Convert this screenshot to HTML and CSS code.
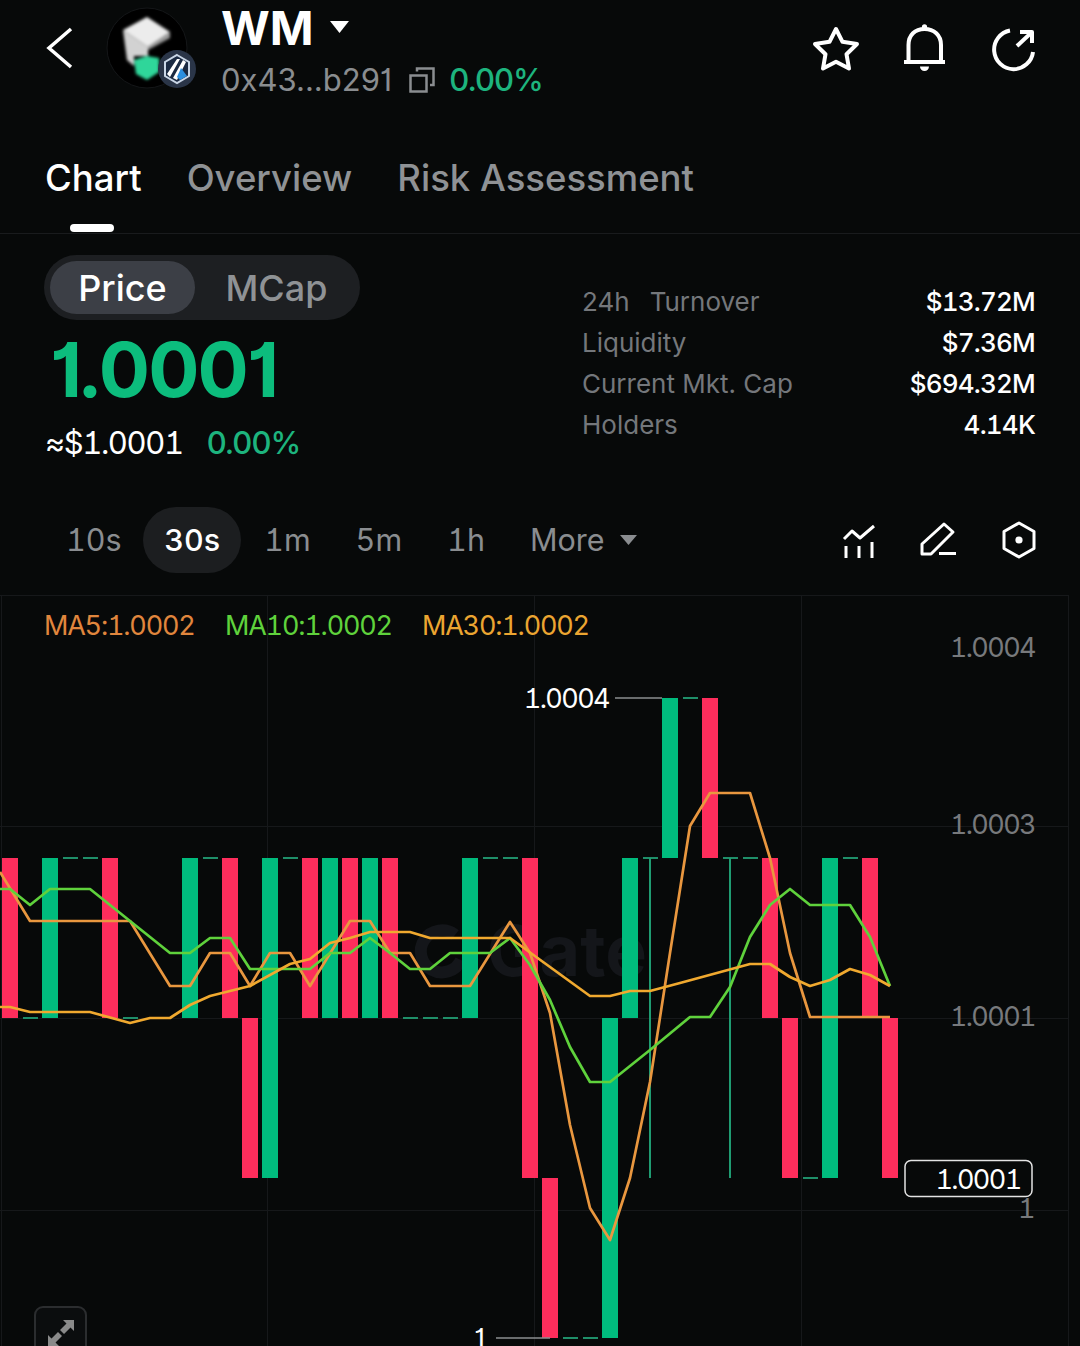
FILE: index.html
```html
<!DOCTYPE html>
<html lang="en">
<head>
<meta charset="utf-8">
<title>WM Chart</title>
<link rel="stylesheet" href="styles.css">
</head>
<body>
<main class="page">
  <header class="header">
    <svg class="back" viewBox="46 24 28 48"><polyline points="71,29 49,48 71,67"/></svg>
    <svg class="avatar" viewBox="107 3 90 90">
      <circle class="av-disc" cx="147" cy="48" r="40"/>
      <g class="av-cube">
        <polygon class="c1" points="147,17 170,32 148,47 123,30"/>
        <polygon class="c2" points="123,30 148,47 148,56 134,56 134,66 127,60"/>
        <polygon class="c3" points="148,47 170,32 170,38 148,50"/>
        <polygon class="c4" points="134,60 147,56 159,58 159,72 147,80 136,74"/>
      </g>
      <circle class="bd-disc" cx="177" cy="69" r="19"/>
      <polygon class="bd-hex" points="177,55 189,62 189,76 177,83 165,76 165,62"/>
      <path class="bd-white" d="M167 74 L177 59 L180 59 L170 77 Z M173 78 L183 60 L186 62 L177 80 Z"/>
      <path class="bd-blue" d="M181 68 L187 76 L180 80 L177 77 Z"/>
    </svg>
    <div class="title-col">
      <div class="title-row">
        <h1 class="symbol">WM</h1>
        <svg class="title-caret" viewBox="0 0 19 12"><polygon points="0,0 19,0 9.5,12"/></svg>
      </div>
      <div class="addr-row">
        <span class="addr">0x43...b291</span>
        <svg class="copy" viewBox="0 0 26 26"><rect x="1.5" y="8.5" width="16" height="16"/><path d="M8 4.5 V1.5 H24.5 V18 H21"/></svg>
        <span class="change">0.00%</span>
      </div>
    </div>
    <div class="actions">
      <svg class="act" viewBox="0 0 48 48"><polygon points="24,4 30.5,16.8 45,19 34.5,29.2 37,43.5 24,36.7 11,43.5 13.5,29.2 3,19 17.5,16.8"/></svg>
      <svg class="act bell" viewBox="1 0 48 50"><path d="M8.5 38 V21 C8.5 11 15 5 24.5 5 S41 11 41 21 V38"/><path d="M4 38 H45"/><path class="solid" d="M20 42.5 h9 a4.5 4.5 0 0 1 -9 0 z"/><circle class="solid" cx="24.5" cy="2.8" r="2.6"/></svg>
      <svg class="act" viewBox="0 0 48 50"><path d="M20 6.5 A19.5 19.5 0 1 0 43 28"/><path d="M27 22 L42 8"/><path d="M30 8 H42 V19"/></svg>
    </div>
  </header>

  <nav class="tabs">
    <div class="tab active">Chart<i class="tab-mark"></i></div>
    <div class="tab">Overview</div>
    <div class="tab">Risk Assessment</div>
  </nav>

  <section class="market">
    <div class="market-left">
      <div class="toggle">
        <span class="toggle-item on">Price</span>
        <span class="toggle-item">MCap</span>
      </div>
      <div class="price">1.0001</div>
      <div class="sub">
        <span class="sub-value">≈$1.0001</span>
        <span class="sub-change">0.00%</span>
      </div>
    </div>
    <dl class="stats">
      <dt><span class="h24">24h</span>Turnover</dt><dd>$13.72M</dd>
      <dt>Liquidity</dt><dd>$7.36M</dd>
      <dt>Current Mkt. Cap</dt><dd>$694.32M</dd>
      <dt>Holders</dt><dd>4.14K</dd>
    </dl>
  </section>

  <section class="toolbar">
    <span class="tf">10s</span>
    <span class="tf on">30s</span>
    <span class="tf">1m</span>
    <span class="tf">5m</span>
    <span class="tf">1h</span>
    <span class="tf more">More<svg class="more-caret" viewBox="0 0 17 10"><polygon points="0,0 17,0 8.5,10"/></svg></span>
    <div class="tools">
      <svg class="tool t1" viewBox="843 520 33 38"><polyline points="844,538 852,530 860,537 874,525"/><path d="M846 545 V557 M859 545 V557 M872 541 V557"/></svg>
      <svg class="tool t2" viewBox="922 520 37 38"><path d="M924 543 L946 523 L955 531 L933 553 H924 Z"/><path d="M941 552.5 H958"/></svg>
      <svg class="tool t3" viewBox="1001 520 36 40"><polygon points="1019,523 1034,531.5 1034,548.5 1019,557 1004,548.5 1004,531.5"/><circle class="solid" cx="1019" cy="540" r="3.6"/></svg>
    </div>
  </section>

  <section class="chart">
    <svg class="plot" viewBox="0 595 1080 751">
      <path class="grid" d="M0 595.5 H1068 M0 826.5 H1068 M0 1018.5 H1068 M0 1210.5 H1068 M1.5 595 V1346 M267.5 595 V1346 M534.5 595 V1346 M801.5 595 V1346 M1068.5 595 V1346"/>
      <path class="wm-logo" d="M455 935 A21 21 0 1 0 461 960"/>
      <text class="wm" x="487" y="976">Gate</text>

      <path class="dash" d="M63 858 H78 M83 858 H98 M203 858 H218 M283 858 H298 M483 858 H498 M503 858 H518 M643 858 H658 M723 858 H738 M743 858 H758 M843 858 H858 M683 698 H698 M23 1018 H38 M123 1018 H138 M403 1018 H418 M423 1018 H438 M443 1018 H458 M803 1178 H818 M563 1338 H578 M583 1338 H598"/>
      <path class="stem" d="M650 858 V1178 M730 858 V1178"/>

      <g class="up">
        <rect x="42" y="858" width="16" height="160"/>
        <rect x="182" y="858" width="16" height="160"/>
        <rect x="262" y="858" width="16" height="320"/>
        <rect x="322" y="858" width="16" height="160"/>
        <rect x="362" y="858" width="16" height="160"/>
        <rect x="462" y="858" width="16" height="160"/>
        <rect x="602" y="1018" width="16" height="320"/>
        <rect x="622" y="858" width="16" height="160"/>
        <rect x="662" y="698" width="16" height="160"/>
        <rect x="822" y="858" width="16" height="320"/>
      </g>
      <g class="down">
        <rect x="2" y="858" width="16" height="160"/>
        <rect x="102" y="858" width="16" height="160"/>
        <rect x="222" y="858" width="16" height="160"/>
        <rect x="242" y="1018" width="16" height="160"/>
        <rect x="302" y="858" width="16" height="160"/>
        <rect x="342" y="858" width="16" height="160"/>
        <rect x="382" y="858" width="16" height="160"/>
        <rect x="522" y="858" width="16" height="320"/>
        <rect x="542" y="1178" width="16" height="160"/>
        <rect x="702" y="698" width="16" height="160"/>
        <rect x="762" y="858" width="16" height="160"/>
        <rect x="782" y="1018" width="16" height="160"/>
        <rect x="862" y="858" width="16" height="160"/>
        <rect x="882" y="1018" width="16" height="160"/>
      </g>

      <polyline class="ma ma5" points="0,872 30,921 130,921 170,986 190,986 210,953 230,953 250,986 270,953 290,953 310,986 350,921 370,921 390,953 410,953 430,986 470,986 510,922 530,953 550,1013 570,1125 590,1208 610,1240 630,1178 650,1082 670,953 690,826 710,793 750,793 770,858 790,953 810,1017 890,1017"/>
      <polyline class="ma ma10" points="0,889 10,889 30,905 50,889 90,889 130,921 170,953 190,953 210,938 230,938 250,969 310,969 330,953 350,953 370,938 390,953 410,969 430,969 450,953 490,953 510,938 530,965 550,1000 570,1047 590,1082 610,1082 650,1050 690,1017 710,1017 730,987 750,937 770,905 790,889 810,905 850,905 870,937 890,986"/>
      <polyline class="ma ma30" points="0,1007 10,1007 30,1012 90,1012 130,1023 150,1018 170,1018 190,1005 210,996 250,986 290,964 310,959 330,943 350,938 370,932 410,932 430,938 510,938 590,996 610,996 630,991 650,991 680,983 750,964 770,964 790,977 810,986 830,980 850,969 870,975 890,986"/>

      <text class="lbl legend l5" x="44" y="635">MA5:1.0002</text>
      <text class="lbl legend l10" x="225" y="635">MA10:1.0002</text>
      <text class="lbl legend l30" x="422" y="635">MA30:1.0002</text>

      <text class="lbl axis end" x="1035" y="657">1.0004</text>
      <text class="lbl axis end" x="1035" y="834">1.0003</text>
      <text class="lbl axis end" x="1035" y="1026">1.0001</text>
      <text class="lbl axis end" x="1034" y="1218">1</text>

      <path class="lead" d="M615 698 H662 M496 1338 H550"/>
      <text class="lbl mark end" x="609" y="708">1.0004</text>
      <text class="lbl mark end" x="488" y="1348">1</text>

      <rect class="tag" x="905" y="1160.500" width="127" height="36" rx="6"/>
      <text class="lbl mark mid" x="978" y="1189">1.0001</text>
    </svg>
    <div class="expand">
      <svg class="expand-icon" viewBox="0 0 26 30"><path d="M15 0 H26 V11 L22.500 7.500 L16 14 L12 10 L18.500 3.500 Z"/><path d="M0 26 V15 L3.500 18.500 L10 12 L14 16 L7.500 22.500 L11 26 Z"/></svg>
    </div>
  </section>
</main>
</body>
</html>
```
FILE: styles.css
```css
* { box-sizing: border-box; margin: 0; padding: 0; }
html, body { background: #070909; }
body { font-family: Inter, "Liberation Sans", sans-serif; color: #fff; }
.page { width: 1080px; height: 1346px; overflow: hidden; display: flex; flex-direction: column; font-feature-settings: "cv01" 1; }

.header { display: flex; height: 110px; padding-left: 46px; flex: none; }
.back { width: 28px; height: 48px; margin-top: 24px; fill: none; stroke: #fff; stroke-width: 3.5; }
.avatar { width: 90px; height: 90px; margin: 3px 0 0 33px; overflow: visible; }
.av-disc { fill: #000; stroke: #141618; stroke-width: 1; }
.av-cube { filter: blur(1.5px); }
.c1 { fill: #ececec; }
.c2 { fill: #d2d2d2; }
.c3 { fill: #9c9c9c; }
.c4 { fill: #2fd69a; }
.bd-disc { fill: #2a3548; }
.bd-hex { fill: #1b2a42; stroke: #c9d6e6; stroke-width: 2; }
.bd-white { fill: #fff; }
.bd-blue { fill: #2b8fe0; }
.title-col { margin-left: 25px; display: flex; flex-direction: column; }
.title-row { display: flex; align-items: center; height: 56px; }
.symbol { font-size: 47px; line-height: 56px; font-weight: 700; margin-left: -1px; }
.title-caret { width: 19px; height: 12px; margin: 0 0 2px 16px; fill: #fff; }
.addr-row { display: flex; align-items: center; height: 48px; }
.addr { font-size: 31px; line-height: 48px; color: #8a8d90; margin-left: -1px; }
.copy { width: 26px; height: 26px; margin-left: 17px; fill: none; stroke: #8a8d90; stroke-width: 2.5; }
.change { font-size: 31px; line-height: 48px; font-weight: 500; color: #1db47e; margin-left: 14px; letter-spacing: -1px; }
.actions { margin-left: auto; margin-right: 42px; display: flex; gap: 41px; padding-top: 24px; }
.act { width: 48px; height: 50px; fill: none; stroke: #fff; stroke-width: 4; stroke-linejoin: round; }
.solid { fill: #fff; stroke: none; }

.tabs { display: flex; gap: 45px; height: 124px; padding: 44px 0 0 45px; border-bottom: 1px solid #191b1d; flex: none; }
.tab { font-size: 36.500px; line-height: 48px; font-weight: 500; color: #8f9295; white-space: nowrap; display: flex; flex-direction: column; }
.tab.active { color: #fff; }
.tab-mark { display: block; width: 44px; height: 8px; border-radius: 4px; background: #fff; margin: 22px 0 0 25px; }

.market { display: flex; justify-content: space-between; height: 273px; padding: 21px 45px 0 44px; flex: none; }
.market-left { display: flex; flex-direction: column; align-items: flex-start; }
.toggle { display: flex; align-items: center; width: 316px; height: 65px; padding: 0 6px; border-radius: 33px; background: #1d1f22; }
.toggle-item { width: 145px; height: 53px; line-height: 54px; border-radius: 27px; font-size: 36px; font-weight: 500; text-align: center; color: #8f9295; }
.toggle-item.on { background: #3c3f46; color: #fff; margin-right: 9px; }
.price { font-size: 76px; line-height: 76px; font-weight: 700; color: #0cbd7d; margin: 11px 0 0 6px; letter-spacing: -1.800px; }
.sub { display: flex; gap: 24px; font-size: 31px; line-height: 40px; margin: 16px 0 0 1px; }
.sub-value { font-feature-settings: "tnum" 1, "cv01" 1; letter-spacing: -1.400px; }
.sub-change { color: #1db47e; font-weight: 500; letter-spacing: -1px; }
.stats { display: grid; grid-template-columns: 1fr auto; width: 453px; margin-top: 25.500px; grid-auto-rows: 41px; font-size: 26px; line-height: 41px; }
.stats dt { color: #74777b; }
.stats dd { color: #fff; text-align: right; font-weight: 500; font-feature-settings: "tnum" 1, "cv01" 1; letter-spacing: -0.800px; }
.h24 { margin-right: 20px; }

.toolbar { display: flex; align-items: center; height: 66px; padding-left: 43.500px; flex: none; }
.tf { padding: 0 22.500px; height: 66px; line-height: 66px; border-radius: 33px; font-size: 30.500px; color: #8a8d90; display: flex; align-items: center; font-feature-settings: "tnum" 1, "cv01" 1; }
.tf.on { padding: 0 21px; margin: 0 0.500px 0 -1px; background: #1c1e20; color: #fff; font-weight: 500; }
.more-caret { width: 17px; height: 10px; margin-left: 15px; fill: #8a8d90; }
.tools { margin-left: auto; margin-right: 43px; display: flex; align-items: center; gap: 44px; }
.tool { height: 38px; fill: none; stroke: #fff; stroke-width: 3; stroke-linejoin: round; overflow: visible; }
.t1 { width: 33px; }
.t2 { width: 37px; }
.t3 { width: 36px; height: 40px; }

.chart { position: relative; margin-top: 22px; flex: 1; min-height: 0; overflow: hidden; }
.plot { display: block; width: 1080px; height: 751px; }
.grid { fill: none; stroke: #16181a; stroke-width: 1; }
.wm { font-size: 70px; font-weight: 700; fill: #14161a; }
.wm-logo { fill: none; stroke: #14161a; stroke-width: 12; }
.up rect { fill: #00bb7d; }
.down rect { fill: #fe2d5c; }
.dash { fill: none; stroke: #1f8f69; stroke-width: 2; }
.stem { fill: none; stroke: #1f9c72; stroke-width: 2; }
.ma { fill: none; stroke-width: 2.700; stroke-linejoin: round; }
.ma5 { stroke: #e9973f; }
.ma10 { stroke: #5fd23c; }
.ma30 { stroke: #f0a92f; }
.lbl { font-size: 27px; font-feature-settings: "tnum" 1, "cv01" 1; letter-spacing: -1.600px; }
.legend { letter-spacing: -1.200px; }
.l5 { fill: #e0863d; }
.l10 { fill: #5fd23c; }
.l30 { fill: #eba531; }
.axis { fill: #77797c; }
.mark { fill: #fff; }
.end { text-anchor: end; }
.mid { text-anchor: middle; }
.lead { fill: none; stroke: #8b8d8f; stroke-width: 1.500; }
.tag { fill: #070909; stroke: #e4e4e4; stroke-width: 1.500; }
.expand { position: absolute; left: 34px; top: 711px; width: 53px; height: 60px; border: 2px solid #2b2d2f; border-radius: 9px; background: #0b0d0e; }
.expand-icon { display: block; width: 26px; height: 30px; margin: 12px 0 0 12px; fill: #8a8a8a; }
```
